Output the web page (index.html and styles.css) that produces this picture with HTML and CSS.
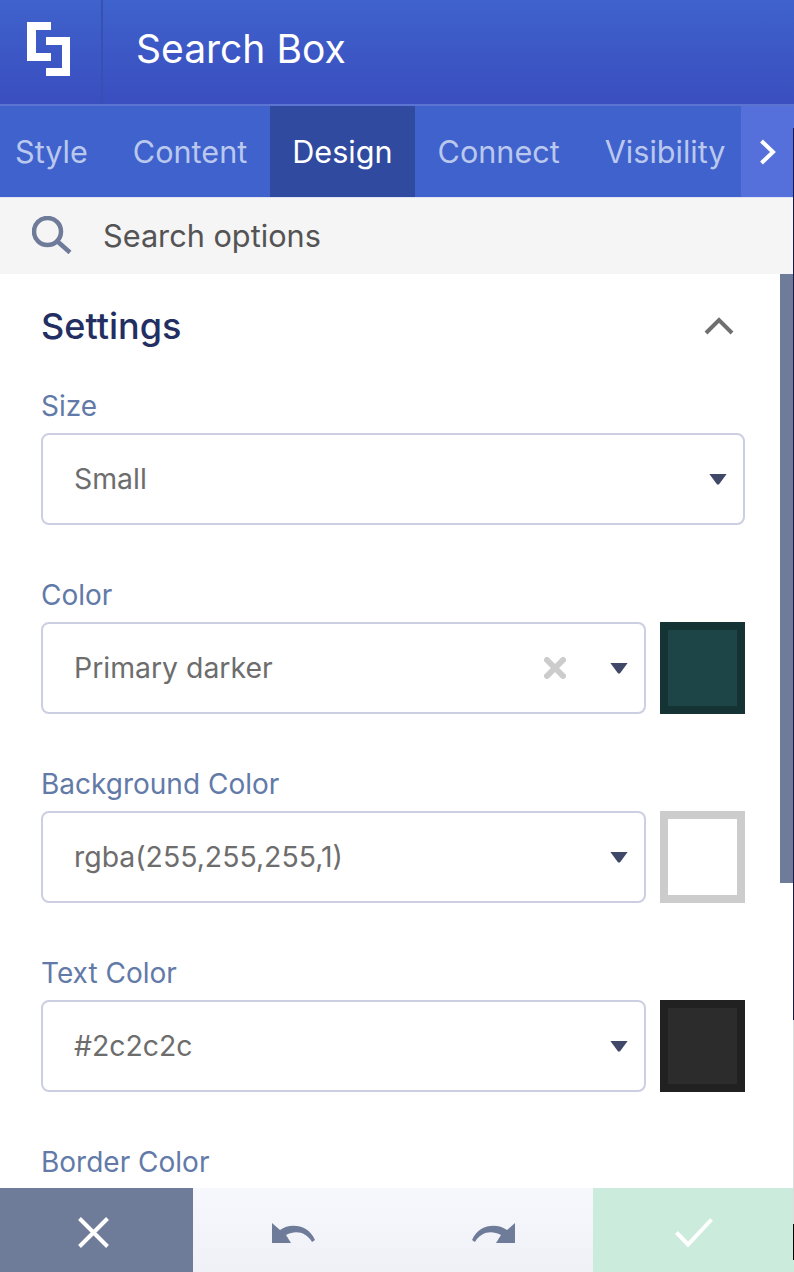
FILE: index.html
```html
<!DOCTYPE html>
<html lang="en">
<head>
<meta charset="utf-8">
<title>Search Box</title>
<link rel="stylesheet" href="styles.css">
</head>
<body>
<div class="panel">
  <header class="header">
    <div class="logo">
      <svg width="43" height="54" viewBox="0 0 43 54"><path class="logo-path" d="M0 0H24V8H9V31H24V39H0Z"/><path class="logo-path" d="M19 15H43V54H19V46H35V23H19Z"/></svg>
    </div>
    <h1 class="title">Search Box</h1>
  </header>
  <nav class="tabs">
    <div class="tab-strip">
      <span class="tab">Style</span>
      <span class="tab">Content</span>
      <span class="tab tab-active">Design</span>
      <span class="tab">Connect</span>
      <span class="tab">Visibility</span>
    </div>
    <span class="tab-next">
      <svg width="18" height="26" viewBox="0 0 18 26"><path class="next-path" d="M2.500 2L14 13L2.500 24"/></svg>
    </span>
  </nav>
  <div class="search">
    <svg class="search-icon" width="40" height="38" viewBox="0 0 40 38"><circle class="search-stroke" cx="15.500" cy="15.500" r="13.500"/><path class="search-stroke" d="M25 25L38 36.500"/></svg>
    <span class="search-text">Search options</span>
  </div>
  <main class="content">
    <div class="section-head">
      <h2 class="section-title">Settings</h2>
      <svg width="30" height="20" viewBox="0 0 30 20"><path class="collapse-path" d="M2 17L15 4L28 17"/></svg>
    </div>
    <section class="field">
      <div class="label">Size</div>
      <div class="row">
        <div class="select"><span class="value">Small</span><span class="caret"></span></div>
      </div>
    </section>
    <section class="field">
      <div class="label">Color</div>
      <div class="row">
        <div class="select"><span class="value">Primary darker</span>
          <svg class="clear" width="22" height="22" viewBox="0 0 22 22"><path class="clear-path" d="M3 3L19 19M19 3L3 19"/></svg>
          <span class="caret"></span></div>
        <div class="swatch swatch-teal"></div>
      </div>
    </section>
    <section class="field">
      <div class="label">Background Color</div>
      <div class="row">
        <div class="select"><span class="value">rgba(255,255,255,1)</span><span class="caret"></span></div>
        <div class="swatch swatch-white"></div>
      </div>
    </section>
    <section class="field">
      <div class="label">Text Color</div>
      <div class="row">
        <div class="select"><span class="value">#2c2c2c</span><span class="caret"></span></div>
        <div class="swatch swatch-dark"></div>
      </div>
    </section>
    <section class="field">
      <div class="label">Border Color</div>
    </section>
    <div class="scrollbar"></div>
  </main>
  <footer class="footer">
    <div class="foot-btn foot-cancel">
      <svg width="31" height="31" viewBox="0 0 31 31"><path class="foot-white" d="M1.500 1.500L29.500 29.500M29.500 1.500L1.500 29.500"/></svg>
    </div>
    <div class="foot-mid">
      <svg width="43" height="20" viewBox="0 0 43 20"><path class="foot-fill" d="M0 0L8 7C18 0 36 1 43 17L40 19C34 9 24 7 14 12L19 20H0Z"/></svg>
      <svg width="43" height="20" viewBox="0 0 43 20"><path class="foot-fill" d="M43 0L35 7C25 0 7 1 0 17L3 19C9 9 19 7 29 12L24 20H43Z"/></svg>
    </div>
    <div class="foot-btn foot-ok">
      <svg width="38" height="30" viewBox="0 0 38 30"><path class="foot-white" d="M1.500 14.500L13 26.500L36.500 1.500"/></svg>
    </div>
  </footer>
  <div class="edge"></div>
</div>
</body>
</html>
```
FILE: styles.css
```css
* { box-sizing: border-box; }
html, body { margin: 0; padding: 0; }
body { background: #fff; font-family: Inter, "Liberation Sans", sans-serif; }
.panel { position: relative; width: 794px; height: 1272px; display: flex; flex-direction: column; overflow: hidden; }

.header { height: 104px; display: flex; align-items: stretch; background: linear-gradient(#3f62cc, #3a4ebf); flex: none; }
.logo { width: 103px; border-right: 2px solid #3650b4; display: flex; align-items: center; justify-content: center; padding-right: 5px; padding-bottom: 6px; }
.logo-path { fill: #fff; }
.title { margin: 0 0 0 33px; font-size: 39px; line-height: 97px; font-weight: 400; color: #fff; }

.tabs { height: 94px; display: flex; align-items: stretch; background: #3f62cc; border-top: 2px solid #5b74d2; border-bottom: 1px solid #dfe3f3; flex: none; }
.tab-strip { flex: 1; min-width: 0; display: flex; overflow: hidden; }
.tab { flex: none; padding: 0 22.500px; font-size: 30.600px; line-height: 91px; color: #bac8ee; }
.tab:first-child { margin-left: -7.500px; }
.tab-active { background: #2f4a9f; color: #fff; }
.tab-next { flex: none; width: 53px; background: #5570da; display: flex; align-items: center; justify-content: center; }
.next-path { fill: none; stroke: #fff; stroke-width: 4; }

.search { height: 76px; display: flex; align-items: center; background: #f5f5f5; padding-left: 32px; flex: none; }
.search-icon { flex: none; margin-top: -3px; }
.search-stroke { fill: none; stroke: #6e7b99; stroke-width: 4.500; }
.search-text { margin-left: 31px; margin-bottom: 2px; font-size: 30.700px; color: #545454; }

.content { position: relative; flex: 1; min-height: 0; background: #fff; padding: 0 49px 0 41px; overflow: hidden; }
.section-head { height: 107px; display: flex; align-items: center; justify-content: space-between; padding: 0 11px 3px 0; }
.section-title { margin: 0; font-size: 36px; font-weight: 500; color: #232f63; }
.collapse-path { fill: none; stroke: #6f6f6f; stroke-width: 4; }

.field { margin-bottom: 45px; }
.label { margin-bottom: 1px; font-size: 28px; line-height: 51px; color: #627aa8; }
.row { display: flex; align-items: stretch; gap: 14px; }
.select { flex: 1; height: 92px; display: flex; align-items: center; padding: 0 16px 0 31px; border: 2px solid #cccfe1; border-radius: 8px; background: #fff; }
.value { flex: 1; padding-bottom: 2px; font-size: 28.400px; color: #6d6d6d; }
.clear { margin-right: 44px; }
.clear-path { fill: none; stroke: #cccccc; stroke-width: 6; stroke-linecap: round; }
.caret { width: 18px; height: 11px; background: #40486a; clip-path: polygon(0 0, 100% 0, 55% 100%, 45% 100%); }
.swatch { width: 85px; height: 92px; border: 8px solid; flex: none; }
.swatch-teal { background: #1d4447; border-color: #153335; }
.swatch-white { background: #fff; border-color: #cccccc; }
.swatch-dark { background: #2c2c2c; border-color: #212121; }

.scrollbar { position: absolute; top: 0; right: 1px; width: 13px; height: 609px; background: #6e7b99; }

.footer { height: 84px; display: flex; flex: none; }
.foot-btn { display: flex; align-items: center; justify-content: center; padding-top: 5px; }
.foot-cancel { width: 193px; background: #6e7b99; padding-right: 7px; }
.foot-ok { width: 201px; background: #cbebdd; }
.foot-mid { flex: 1; display: flex; align-items: center; justify-content: space-around; background: linear-gradient(#f7f8fd, #f0f1f6); padding-top: 5px; }
.foot-white { fill: none; stroke: #fff; stroke-width: 4; }
.foot-fill { fill: #6e7b99; }

.edge { position: absolute; top: 128px; right: 0; width: 1px; height: 1132px; background: linear-gradient(#1c1548 0 892px, #dddddd 892px 1096px, #000000 1096px); }
```
